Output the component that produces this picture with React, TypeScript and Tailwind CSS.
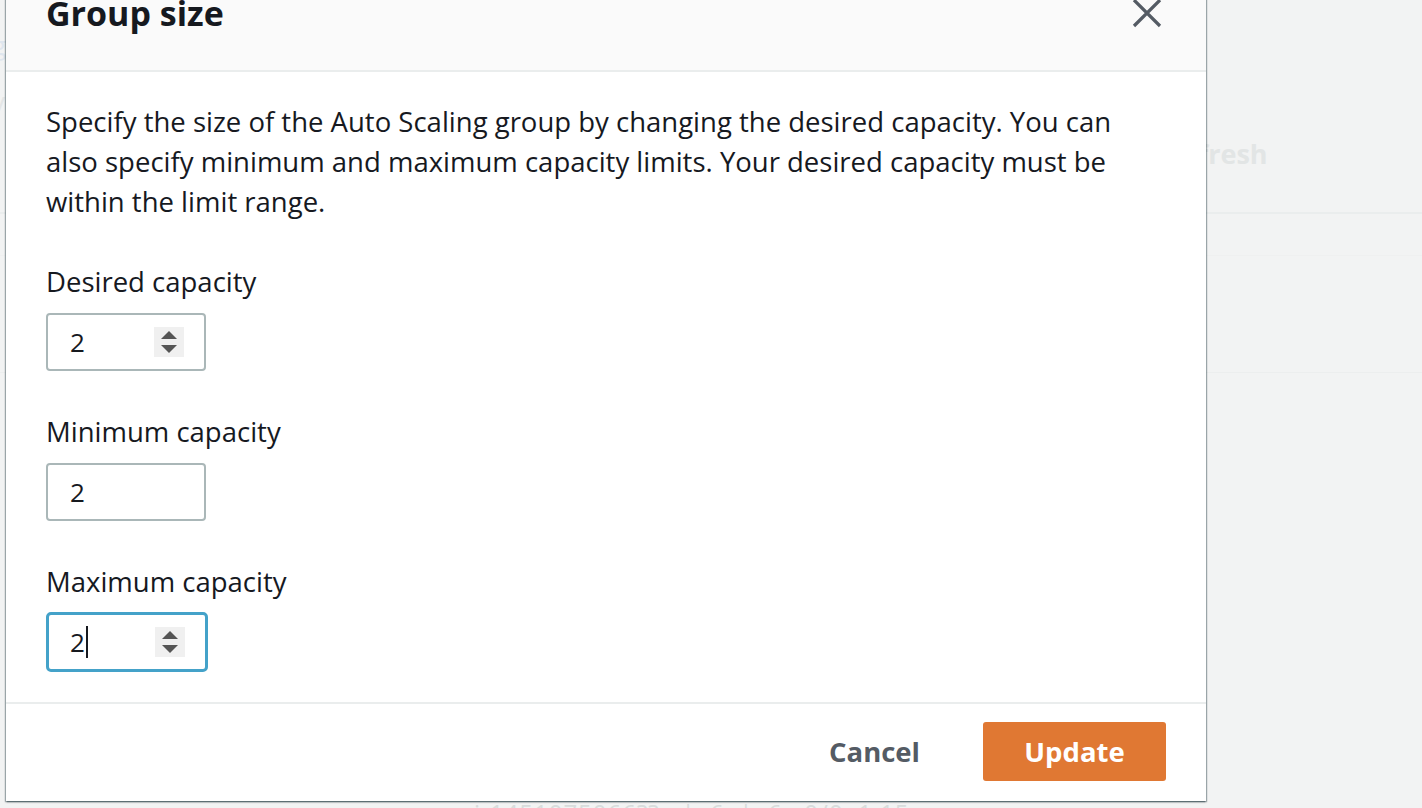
const font = { fontFamily: '"Open Sans", "Noto Sans", Arial, sans-serif' };

function Spinner() {
  return (
    <div className="flex h-[30px] w-[30px] flex-col items-center justify-center gap-[6px] bg-[#f0f0f0]">
      <svg width="16" height="8" viewBox="0 0 16 8">
        <path d="M8 0 L16 8 L0 8 Z" fill="#555" />
      </svg>
      <svg width="16" height="8" viewBox="0 0 16 8">
        <path d="M0 0 L16 0 L8 8 Z" fill="#555" />
      </svg>
    </div>
  );
}

function CloseIcon() {
  return (
    <svg width="30" height="30" viewBox="0 0 30 30" className="mt-[4px]">
      <path d="M2 2 L28 28 M28 2 L2 28" stroke="#545b64" strokeWidth="3.2" fill="none" />
    </svg>
  );
}

function NumberField({
  label,
  value,
  spinner,
  focused,
}: {
  label: string;
  value: string;
  spinner?: boolean;
  focused?: boolean;
}) {
  return (
    <div className="flex flex-col">
      <label className="text-[27.5px] leading-[40px] text-[#16191f]">{label}</label>
      <div
        className={
          focused
            ? "mt-[10px] flex h-[60px] w-[162px] items-center justify-between rounded-[5px] border-[3px] border-[#44a2c9] pl-[21px] pr-[20px]"
            : "mt-[11px] flex h-[58px] w-[160px] items-center justify-between rounded-[4px] border-2 border-[#aab7b8] pl-[22px] pr-[20px]"
        }
      >
        <span className="flex items-center text-[26px] leading-[36px] text-[#16191f]">
          {value}
          {focused && <span className="ml-px h-[32px] w-[2px] bg-[#16191f]" />}
        </span>
        {spinner && <Spinner />}
      </div>
    </div>
  );
}

export default function App() {
  return (
    <div className="relative h-[808px] w-full overflow-hidden bg-[#f2f3f3]" style={font}>
      {/* page behind the modal */}
      <div className="absolute left-0 right-0 top-[212px] h-[2px] bg-[#eaeded]" />
      <div className="absolute left-0 right-0 top-[255px] h-px bg-[#eff0f0]" />
      <div className="absolute left-0 right-0 top-[372px] h-px bg-[#eceeee]" />
      <div className="absolute left-[1164px] top-[134px] text-[27px] font-bold text-[#e2e5e5]">Refresh</div>
      <div className="absolute left-[-8px] top-[26px] text-[26px] text-[#dfe6ee]">g</div>
      <div className="absolute left-[-8px] top-[82px] text-[26px] text-[#e4e6e6]">v</div>
      <div className="absolute left-[474px] top-[795px] text-[24px] tracking-[1px] text-[#d8dcdc]">
        i-1451075066?? &nbsp; | &nbsp;6 &nbsp;| &nbsp;6 &nbsp; 0/0 &nbsp;1.15
      </div>

      {/* modal */}
      <div className="absolute left-[6px] top-[-20px] flex w-[1200px] flex-col bg-white shadow-[0_1px_2px_0_rgba(0,28,36,0.45),1px_1px_1px_0_rgba(0,28,36,0.25),-1px_1px_1px_0_rgba(0,28,36,0.25)]">
        <div className="flex h-[92px] items-start justify-between border-b-2 border-[#eaeded] bg-[#fafafa] pl-[40px] pr-[44px] pt-[14px]">
          <h2 className="text-[34px] font-bold leading-[38px] text-[#16191f]">Group size</h2>
          <CloseIcon />
        </div>

        <div className="flex flex-col gap-[40px] px-[40px] pb-[30px] pt-[30px]">
          <p className="max-w-[1100px] text-[27.5px] leading-[40px] text-[#16191f]">
            Specify the size of the Auto Scaling group by changing the desired capacity. You can also specify minimum and
            maximum capacity limits. Your desired capacity must be within the limit range.
          </p>
          <div className="flex flex-col gap-[41px]">
            <NumberField label="Desired capacity" value="2" spinner />
            <NumberField label="Minimum capacity" value="2" />
            <NumberField label="Maximum capacity" value="2" spinner focused />
          </div>
        </div>

        <div className="flex items-center justify-end gap-[29px] border-t-2 border-[#eaeded] px-[40px] pb-[20px] pt-[18px]">
          <button className="px-[34px] text-[27.5px] font-bold text-[#545b64]">Cancel</button>
          <button className="h-[59px] w-[183px] rounded-[3px] bg-[#e07833] text-[27.5px] font-bold text-white">
            Update
          </button>
        </div>
      </div>
    </div>
  );
}
